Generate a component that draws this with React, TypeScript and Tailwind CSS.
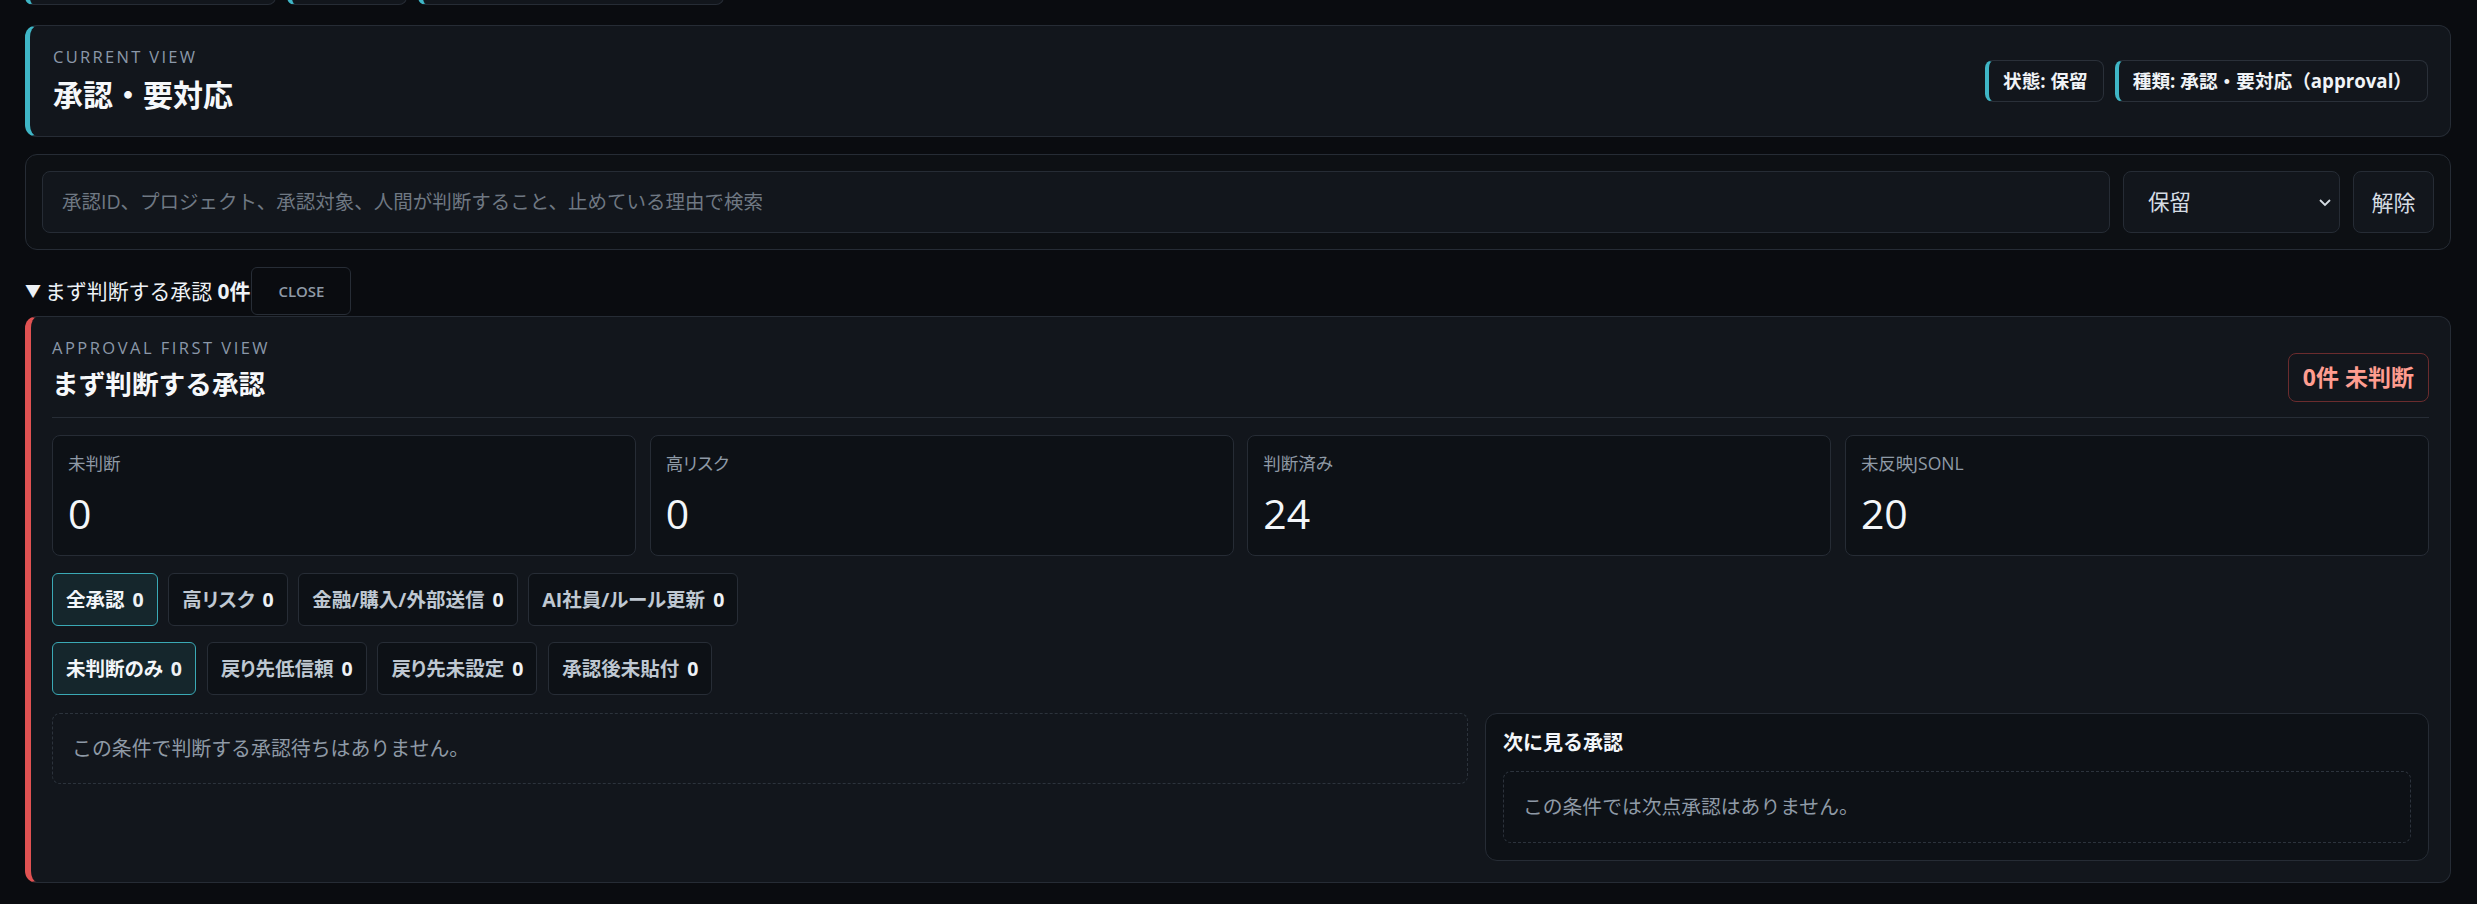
import React from "react";

function Badge({ children }: { children: React.ReactNode }) {
  return (
    <div className="flex h-[42px] items-center rounded-[8px] border border-[#2a3039] border-l-[4px] border-l-[#3fb6c6] bg-[#12161c] pl-[14px] pr-[15px] text-[18.67px] font-bold leading-[24px] text-[#f0f3f6]">
      {children}
    </div>
  );
}

function Chip({ label, active }: { label: string; active?: boolean }) {
  return (
    <div
      className={
        active
          ? "flex h-[53px] items-center gap-[8px] rounded-[6px] border border-[#3aa9b5] bg-[#15262c] px-[13px] text-[19.5px] font-bold leading-[24px] text-[#f3f6f9] [font-feature-settings:'palt']"
          : "flex h-[53px] items-center gap-[8px] rounded-[6px] border border-[#272d36] bg-[#0d1116] px-[13px] text-[19.5px] font-bold leading-[24px] text-[#bfc8d2] [font-feature-settings:'palt']"
      }
    >
      <span>{label}</span>
      <span className="text-[#eef2f6]">0</span>
    </div>
  );
}

function Stat({ label, value }: { label: string; value: string }) {
  return (
    <div className="h-[121px] rounded-[8px] border border-[#262c35] bg-[#0d1116] pl-[15px] pt-[15px]">
      <div className="text-[17.5px] leading-[24px] text-[#8f9aa6] [font-feature-settings:'palt']">{label}</div>
      <div className="mt-[14px] text-[41px] leading-[48px] text-[#f3f6f9]">{value}</div>
    </div>
  );
}

export default function App() {
  return (
    <div className="min-h-screen overflow-hidden bg-[#0a0c10] pl-[25px] pr-[26px] font-['Open_Sans','Noto_Sans_CJK_JP',sans-serif] text-[#e6edf3]">
      {/* tabs scrolled above viewport */}
      <div className="-mt-[43px] flex gap-[11px]">
        <div className="h-[48px] w-[251px] rounded-[8px] border border-[#262c35] border-l-[5px] border-l-[#3fb6c6] bg-[#12161c]" />
        <div className="h-[48px] w-[120px] rounded-[8px] border border-[#262c35] border-l-[5px] border-l-[#3fb6c6] bg-[#12161c]" />
        <div className="h-[48px] w-[306px] rounded-[8px] border border-[#262c35] border-l-[5px] border-l-[#3fb6c6] bg-[#12161c]" />
      </div>

      {/* current view */}
      <div className="mt-[20px] flex items-center justify-between rounded-[12px] border border-[#262c35] border-l-[5px] border-l-[#3fb6c6] bg-[#12161c] py-[21px] pl-[23px] pr-[22px]">
        <div>
          <div className="text-[16.5px] leading-[20px] tracking-[0.14em] text-[#8b98a9]">CURRENT VIEW</div>
          <div className="mt-[8px] text-[30px] font-bold leading-[40px] text-[#f6f8fa]">承認・要対応</div>
        </div>
        <div className="flex gap-[11px]">
          <Badge>状態: 保留</Badge>
          <Badge>種類: 承認・要対応（approval）</Badge>
        </div>
      </div>

      {/* search */}
      <div className="mt-[17px] flex gap-[13px] rounded-[12px] border border-[#262c35] bg-[#0d1014] p-[16px]">
        <div className="flex h-[62px] flex-1 items-center rounded-[8px] border border-[#262c35] bg-[#12161c] pl-[19px] text-[19.5px] text-[#6f7883]">
          承認ID、プロジェクト、承認対象、人間が判断すること、止めている理由で検索
        </div>
        <div className="flex h-[62px] w-[217px] items-center justify-between rounded-[8px] border border-[#262c35] bg-[#12161c] pl-[24px] pr-[7px] text-[21.5px] text-[#d5dce3]">
          <span>保留</span>
          <svg width="14" height="9" viewBox="0 0 14 9" fill="none">
            <polyline points="2,2 7,7 12,2" stroke="#d5dce3" strokeWidth="1.8" />
          </svg>
        </div>
        <div className="flex h-[62px] w-[81px] items-center justify-center rounded-[8px] border border-[#262c35] bg-[#12161c] text-[22px] text-[#d5dce3]">
          解除
        </div>
      </div>

      {/* summary */}
      <div className="mt-[17px] flex h-[48px] items-center">
        <span className="mr-[4px] text-[16px] leading-[28px] text-[#eef2f6]">▼</span>
        <span className="text-[20.9px] leading-[28px] text-[#eef2f6]">まず判断する承認 <b className="font-bold">0件</b></span>
        <div className="ml-[1px] flex h-[48px] w-[100px] items-center justify-center rounded-[6px] border border-[#272d36] bg-[#0a0c10] text-[15px] font-semibold text-[#8f9aa6]">
          CLOSE
        </div>
      </div>

      {/* approval panel */}
      <div className="mt-[1px] rounded-[12px] border border-[#262c35] border-l-[6px] border-l-[#e05252] bg-[#12161c] px-[21px] pb-[21px] pt-[21px]">
        <div className="flex items-end justify-between border-b border-[#272d36] pb-[15px]">
          <div>
            <div className="text-[16.5px] leading-[20px] tracking-[0.15em] text-[#8b98a9]">APPROVAL FIRST VIEW</div>
            <div className="mt-[8px] text-[26.67px] font-bold leading-[36px] text-[#f6f8fa]">まず判断する承認</div>
          </div>
          <div className="flex h-[49px] items-center rounded-[8px] border border-[#6b2c2e] bg-[#12161c] px-[14px] text-[23px] font-bold text-[#ff9d90]">
            0件 未判断
          </div>
        </div>

        <div className="mt-[17px] grid grid-cols-4 gap-[13.5px]">
          <Stat label="未判断" value="0" />
          <Stat label="高リスク" value="0" />
          <Stat label="判断済み" value="24" />
          <Stat label="未反映JSONL" value="20" />
        </div>

        <div className="mt-[17px] flex gap-[10.7px]">
          <Chip label="全承認" active />
          <Chip label="高リスク" />
          <Chip label="金融/購入/外部送信" />
          <Chip label="AI社員/ルール更新" />
        </div>
        <div className="mt-[16px] flex gap-[10.7px]">
          <Chip label="未判断のみ" active />
          <Chip label="戻り先低信頼" />
          <Chip label="戻り先未設定" />
          <Chip label="承認後未貼付" />
        </div>

        <div className="mt-[18px] grid grid-cols-[3fr_2fr] items-start gap-[17px]">
          <div className="flex h-[71px] items-center rounded-[8px] border border-dashed border-[#2c333c] pl-[19px] text-[19.9px] text-[#8f9aa6]">
            この条件で判断する承認待ちはありません。
          </div>
          <div className="rounded-[12px] border border-[#262c35] bg-[#0d1116] p-[17px]">
            <div className="text-[20px] font-bold leading-[24px] text-[#f3f6f9]">次に見る承認</div>
            <div className="mt-[16px] flex h-[72px] items-center rounded-[8px] border border-dashed border-[#2c333c] pl-[19px] text-[19.8px] text-[#8f9aa6]">
              この条件では次点承認はありません。
            </div>
          </div>
        </div>
      </div>
    </div>
  );
}
